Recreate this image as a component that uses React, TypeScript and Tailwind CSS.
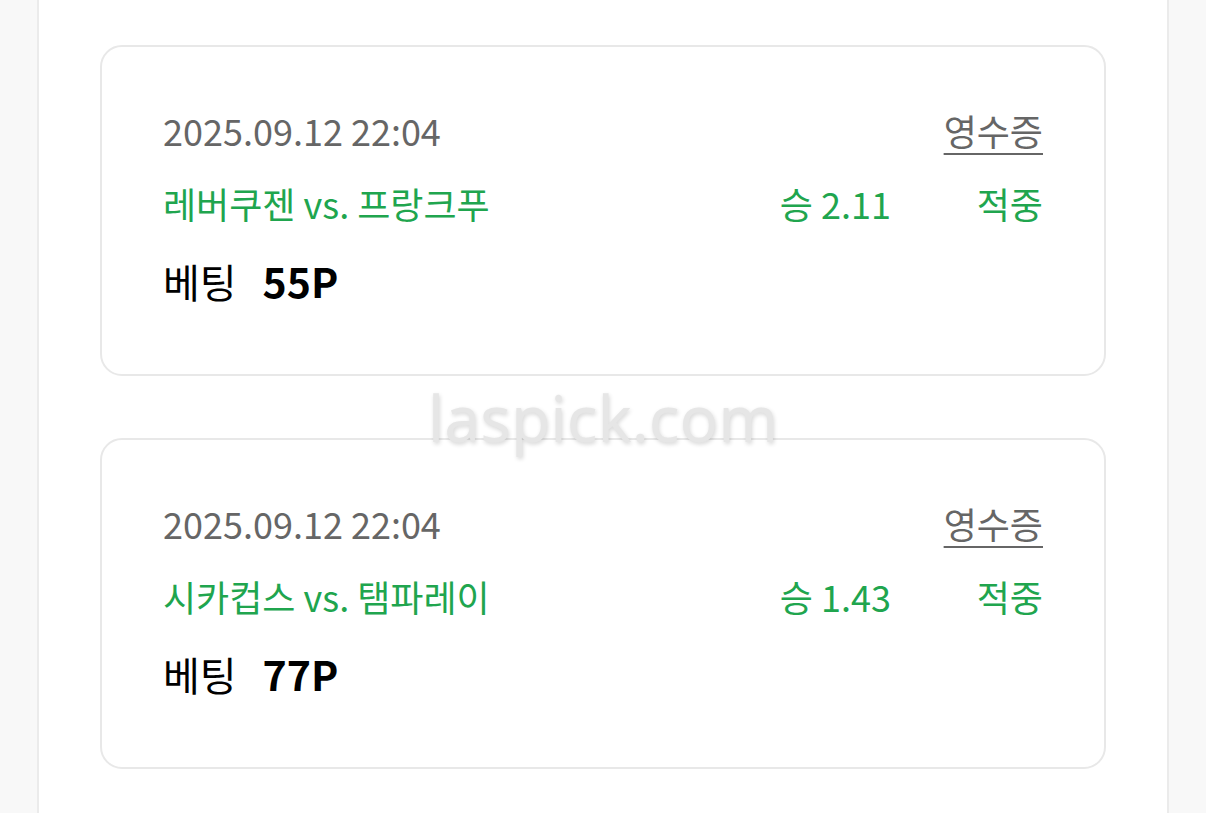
import React from 'react';

type Bet = {
  date: string;
  match: string;
  odds: string;
  result: string;
  amount: string;
};

const bets: Bet[] = [
  { date: '2025.09.12 22:04', match: '레버쿠젠 vs. 프랑크푸', odds: '승 2.11', result: '적중', amount: '55P' },
  { date: '2025.09.12 22:04', match: '시카컵스 vs. 탬파레이', odds: '승 1.43', result: '적중', amount: '77P' },
];

const BetCard: React.FC<{ bet: Bet }> = ({ bet }) => (
  <div className="rounded-[22px] border-2 border-[#e8e8e8] bg-white pl-[61px] pr-[61px] pt-[59px] pb-[68px]">
    <div className="flex h-[48px] items-center justify-between">
      <span className="text-[36px] text-[#666666]">{bet.date}</span>
      <span className="text-[36px] text-[#666666] underline decoration-2 underline-offset-[7px]">영수증</span>
    </div>
    <div className="mt-[25px] flex h-[48px] items-center text-[36px] text-[#20a54e]">
      <span className="flex-1">{bet.match}</span>
      <span>{bet.odds}</span>
      <span className="w-[152px] text-right">{bet.result}</span>
    </div>
    <div className="mt-[29px] flex h-[50px] items-center text-black">
      <span className="text-[40px]">베팅</span>
      <span className="ml-[26px] text-[41px] font-bold">{bet.amount}</span>
    </div>
  </div>
);

export default function App() {
  return (
    <div
      className="relative h-[813px] w-full overflow-hidden bg-[#f8f8f8]"
      style={{ fontFamily: '"Noto Sans CJK KR", "Noto Sans", sans-serif' }}
    >
      <div className="mx-[37px] h-full border-x-2 border-[#ebebeb] bg-white px-[61px] pt-[45px]">
        <div className="flex flex-col gap-[62px]">
          {bets.map((bet, i) => (
            <BetCard key={i} bet={bet} />
          ))}
        </div>
      </div>
      <div className="pointer-events-none absolute left-0 right-0 top-[370px] text-center text-[64px] text-[#e6e6e6] [text-shadow:1px_2px_4px_rgba(0,0,0,0.16)]" style={{ fontFamily: '"Noto Sans", sans-serif' }}>
        laspick.com
      </div>
    </div>
  );
}
